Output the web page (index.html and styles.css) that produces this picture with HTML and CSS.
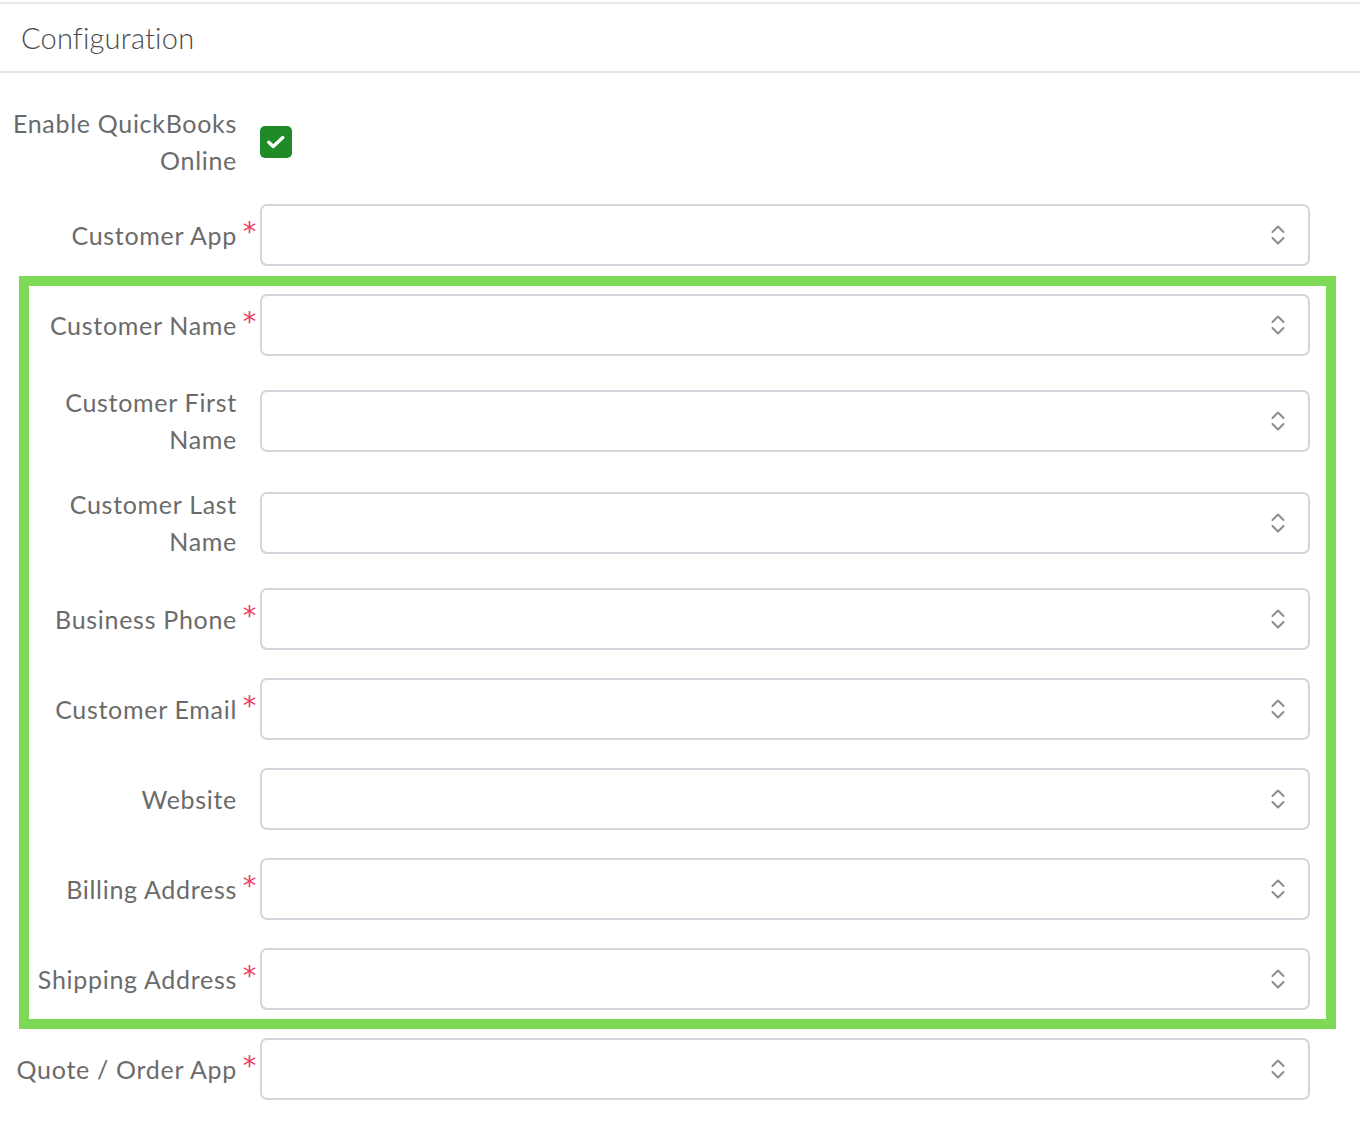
FILE: index.html
```html
<!DOCTYPE html>
<html lang="en">
<head>
<meta charset="utf-8">
<title>Configuration</title>
<link rel="stylesheet" href="styles.css">
</head>
<body>
<div class="panel">
  <div class="panel-header"><h2 class="panel-title">Configuration</h2></div>
  <form class="form">
    <div class="row row-check">
      <label class="lbl">Enable QuickBooks Online</label>
      <span class="req"></span>
      <span class="checkbox"><svg width="20" height="20" viewBox="0 0 20 20"><path d="M2.8 10.2 L7.2 14.4 L16.8 5.6" fill="none" stroke="#fff" stroke-width="3.4" stroke-linecap="round" stroke-linejoin="round"/></svg></span>
    </div>
    <div class="row">
      <label class="lbl">Customer App</label><span class="req">*</span>
      <div class="select"><svg class="chev" width="14" height="22" viewBox="0 0 14 22"><path d="M1.5 8 L7 2.5 L12.5 8 M1.5 14 L7 19.5 L12.5 14" fill="none" stroke="#868b94" stroke-width="2" stroke-linecap="round" stroke-linejoin="round"/></svg></div>
    </div>
    <div class="group">
      <div class="row">
        <label class="lbl">Customer Name</label><span class="req">*</span>
        <div class="select"><svg class="chev" width="14" height="22" viewBox="0 0 14 22"><path d="M1.5 8 L7 2.5 L12.5 8 M1.5 14 L7 19.5 L12.5 14" fill="none" stroke="#868b94" stroke-width="2" stroke-linecap="round" stroke-linejoin="round"/></svg></div>
      </div>
      <div class="row">
        <label class="lbl lbl-wrap">Customer First Name</label><span class="req"></span>
        <div class="select"><svg class="chev" width="14" height="22" viewBox="0 0 14 22"><path d="M1.5 8 L7 2.5 L12.5 8 M1.5 14 L7 19.5 L12.5 14" fill="none" stroke="#868b94" stroke-width="2" stroke-linecap="round" stroke-linejoin="round"/></svg></div>
      </div>
      <div class="row">
        <label class="lbl lbl-wrap">Customer Last Name</label><span class="req"></span>
        <div class="select"><svg class="chev" width="14" height="22" viewBox="0 0 14 22"><path d="M1.5 8 L7 2.5 L12.5 8 M1.5 14 L7 19.5 L12.5 14" fill="none" stroke="#868b94" stroke-width="2" stroke-linecap="round" stroke-linejoin="round"/></svg></div>
      </div>
      <div class="row">
        <label class="lbl">Business Phone</label><span class="req">*</span>
        <div class="select"><svg class="chev" width="14" height="22" viewBox="0 0 14 22"><path d="M1.5 8 L7 2.5 L12.5 8 M1.5 14 L7 19.5 L12.5 14" fill="none" stroke="#868b94" stroke-width="2" stroke-linecap="round" stroke-linejoin="round"/></svg></div>
      </div>
      <div class="row">
        <label class="lbl">Customer Email</label><span class="req">*</span>
        <div class="select"><svg class="chev" width="14" height="22" viewBox="0 0 14 22"><path d="M1.5 8 L7 2.5 L12.5 8 M1.5 14 L7 19.5 L12.5 14" fill="none" stroke="#868b94" stroke-width="2" stroke-linecap="round" stroke-linejoin="round"/></svg></div>
      </div>
      <div class="row">
        <label class="lbl">Website</label><span class="req"></span>
        <div class="select"><svg class="chev" width="14" height="22" viewBox="0 0 14 22"><path d="M1.5 8 L7 2.5 L12.5 8 M1.5 14 L7 19.5 L12.5 14" fill="none" stroke="#868b94" stroke-width="2" stroke-linecap="round" stroke-linejoin="round"/></svg></div>
      </div>
      <div class="row">
        <label class="lbl">Billing Address</label><span class="req">*</span>
        <div class="select"><svg class="chev" width="14" height="22" viewBox="0 0 14 22"><path d="M1.5 8 L7 2.5 L12.5 8 M1.5 14 L7 19.5 L12.5 14" fill="none" stroke="#868b94" stroke-width="2" stroke-linecap="round" stroke-linejoin="round"/></svg></div>
      </div>
      <div class="row">
        <label class="lbl">Shipping Address</label><span class="req">*</span>
        <div class="select"><svg class="chev" width="14" height="22" viewBox="0 0 14 22"><path d="M1.5 8 L7 2.5 L12.5 8 M1.5 14 L7 19.5 L12.5 14" fill="none" stroke="#868b94" stroke-width="2" stroke-linecap="round" stroke-linejoin="round"/></svg></div>
      </div>
    </div>
    <div class="row">
      <label class="lbl">Quote / Order App</label><span class="req">*</span>
      <div class="select"><svg class="chev" width="14" height="22" viewBox="0 0 14 22"><path d="M1.5 8 L7 2.5 L12.5 8 M1.5 14 L7 19.5 L12.5 14" fill="none" stroke="#868b94" stroke-width="2" stroke-linecap="round" stroke-linejoin="round"/></svg></div>
    </div>
  </form>
</div>
</body>
</html>
```
FILE: styles.css
```css
html, body {
  margin: 0;
  padding: 0;
  background: #ffffff;
}
body {
  font-family: "Lato", "Liberation Sans", sans-serif;
  color: #6b6b6b;
}
.panel {
  margin-top: 2px;
  border-top: 2px solid #e6e7ee;
}
.panel-header {
  height: 67px;
  border-bottom: 2px solid #e4e5ea;
  display: flex;
  align-items: center;
  padding-left: 21px;
}
.panel-title {
  margin: 0;
  font-size: 29px;
  font-weight: 300;
  color: #4a4a4a;
  letter-spacing: 0.2px;
}
.form {
  padding-top: 32px;
}
.row {
  display: grid;
  grid-template-columns: 236px 24px 1fr;
  align-items: center;
  padding-right: 50px;
  margin-bottom: 28px;
}
.row-check {
  margin-bottom: 25px;
}
.lbl {
  text-align: right;
  font-size: 25px;
  line-height: 37px;
  letter-spacing: 0.7px;
  color: #6b6b6b;
  padding-left: 0;
  margin-right: -1px;
}
.lbl-wrap {
  padding-left: 60px;
}
.req {
  align-self: start;
  justify-self: center;
  padding-left: 3px;
  margin-top: 17px;
  font-family: "DejaVu Sans", sans-serif;
  font-size: 27px;
  line-height: 22px;
  height: 22px;
  color: #ee3d63;
}
.checkbox {
  width: 32px;
  height: 32px;
  border-radius: 5px;
  background: #1f8b26;
  display: flex;
  align-items: center;
  justify-content: center;
}
.select {
  height: 62px;
  box-sizing: border-box;
  border: 2px solid #d2d6dc;
  border-radius: 7px;
  display: flex;
  align-items: center;
  justify-content: flex-end;
  padding-right: 23px;
}
.chev {
  display: block;
}
.group {
  position: relative;
  margin-bottom: 28px;
}
.group > .row:last-child {
  margin-bottom: 0;
}
.group::before {
  content: "";
  position: absolute;
  top: -18px;
  bottom: -19px;
  left: 19px;
  right: 24px;
  border: 10px solid #7ed957;
  pointer-events: none;
}
```
